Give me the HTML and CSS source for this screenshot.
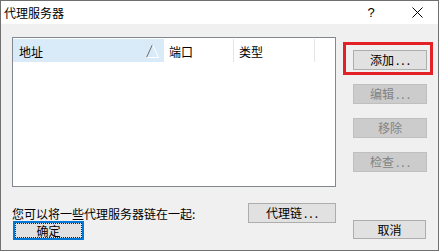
FILE: index.html
```html
<!DOCTYPE html>
<html lang="zh-CN">
<head>
  <meta charset="UTF-8" />
  <title>代理服务器</title>
  <link rel="stylesheet" href="styles.css">
</head>
<body>

  <div class="dialog">
    <!-- Title bar -->
    <div class="titlebar">
      <span class="title">代理服务器</span>
      <span class="help">?</span>
      <span class="close">
        <svg width="11" height="11" viewBox="0 0 11 11"><path d="M0.5 0.5 L10.5 10.5 M10.5 0.5 L0.5 10.5" stroke="#000" stroke-width="1" fill="none"/></svg>
      </span>
    </div>

    <div class="content">
      <div class="main">
        <!-- Proxy list -->
        <div class="list">
          <div class="list-head">
            <div class="col col-addr">
              <span>地址</span>
              <svg class="sort" width="13" height="14" viewBox="0 0 13 14">
                <path d="M0.5 13.5 L6.5 0.5" stroke="#6d6d6d" fill="none"/>
                <path d="M6.5 0.5 L12.5 13.5 L0.5 13.5" stroke="#ffffff" fill="none"/>
              </svg>
            </div>
            <div class="col col-port">端口</div>
            <div class="col col-type">类型</div>
          </div>
        </div>

        <!-- Side buttons -->
        <div class="side">
          <span class="highlight"><button class="btn">添加<span class="dots">...</span></button></span>
          <button class="btn" disabled>编辑<span class="dots">...</span></button>
          <button class="btn" disabled>移除</button>
          <button class="btn" disabled>检查<span class="dots">...</span></button>
        </div>
      </div>

      <div class="chain-row">
        <span>您可以将一些代理服务器链在一起:</span>
        <button class="btn btn-chain">代理链<span class="dots">...</span></button>
      </div>

      <div class="action-row">
        <button class="btn btn-default">确定</button>
        <button class="btn btn-cancel">取消</button>
      </div>
    </div>
  </div>

</body>
</html>
```

FILE: styles.css
```css
body {
  margin: 0;
  background-color: #fff;
  font-family: "Noto Sans CJK SC", "Liberation Sans", sans-serif;
  font-size: 12px;
  color: #000;
}
.dialog {
  width: 439px;
  height: 251px;
  box-sizing: border-box;
  border: 1px solid #707070;
  background-color: #f0f0f0;
}
.titlebar {
  height: 23px;
  background-color: #fff;
  display: flex;
  align-items: center;
  padding-right: 6px;
}
.title {
  padding-left: 3px;
  font-size: 12px;
}
.help {
  margin-left: auto;
  width: 14px;
  text-align: center;
  font-family: "Liberation Sans", sans-serif;
  font-size: 13px;
}
.close {
  width: 30px;
  margin-left: 24px;
  display: flex;
  justify-content: center;
}
.content {
  padding: 13px 0 0 11px;
}
.main {
  display: flex;
  align-items: flex-start;
}
.list {
  width: 324px;
  height: 150px;
  box-sizing: border-box;
  border: 1px solid #828790;
  background-color: #fff;
  padding-top: 1px;
}
.list-head {
  display: flex;
  height: 23px;
}
.col {
  display: flex;
  align-items: center;
  box-sizing: border-box;
  padding-top: 2px;
}
.col-addr {
  width: 151px;
  padding-left: 6px;
  padding-right: 5px;
  justify-content: space-between;
  background-color: #d9ebf9;
}
.sort {
  margin-top: -2px;
}
.col-port {
  width: 70px;
  padding-left: 5px;
  border-right: 1px solid #e5e5e5;
}
.col-type {
  width: 81px;
  padding-left: 5px;
  border-right: 1px solid #e5e5e5;
}
.side {
  margin-left: 17px;
  padding-top: 13px;
  display: flex;
  flex-direction: column;
  gap: 14px;
}
.highlight {
  position: relative;
  display: block;
}
.highlight::after {
  content: "";
  position: absolute;
  left: -10px;
  top: -8px;
  right: -6px;
  bottom: -5px;
  border: 3px solid #e32227;
}
.btn {
  display: block;
  width: 74px;
  height: 20px;
  box-sizing: border-box;
  padding: 0;
  border: 1px solid #adadad;
  background-color: #e1e1e1;
  font-family: "Noto Sans CJK SC", "Liberation Sans", sans-serif;
  font-size: 12px;
  line-height: 16px;
  color: #000;
}
.dots {
  letter-spacing: 2px;
  margin-left: 2px;
  margin-right: -2px;
}
.btn:disabled {
  background-color: #cccccc;
  border-color: #bfbfbf;
  color: #838383;
}
.chain-row {
  width: 324px;
  margin-top: 16px;
  display: flex;
  justify-content: space-between;
  align-items: center;
}
.btn-chain {
  width: 88px;
}
.action-row {
  width: 414px;
  margin-top: -3px;
  padding-left: 1px;
  box-sizing: border-box;
  display: flex;
  justify-content: space-between;
}
.btn-default {
  width: 71px;
  height: 19px;
  margin-top: 1px;
  border: 2px solid #0078d7;
  outline: 1px dotted #222;
  outline-offset: -3px;
  line-height: 14px;
}
.btn-cancel {
  width: 73px;
  height: 19px;
  line-height: 16px;
}
```
